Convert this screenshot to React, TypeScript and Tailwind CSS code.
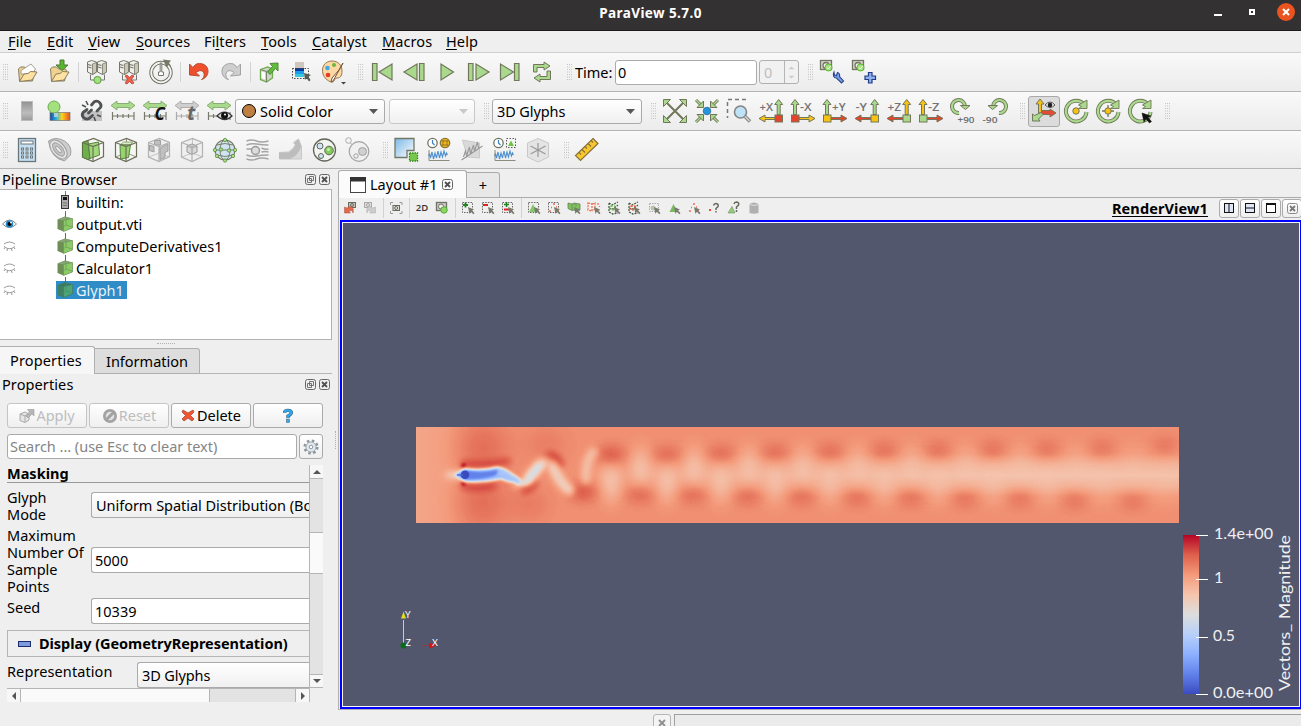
import React from "react";

const G = "#a8d98c";
const O = "#72765a";
const Y = "#f7c211";
const R = "#e8412c";

type Kids = { children?: React.ReactNode };

const Icon = ({ children, wide }: Kids & { wide?: boolean }) => (
  <svg className={wide ? "h-8 w-[33px] shrink-0" : "h-8 w-8 shrink-0"} viewBox={wide ? "-0.5 0 33 32" : "0 0 32 32"} fill="none">
    {children}
  </svg>
);

const Grip = ({ first, tight }: { first?: boolean; tight?: boolean }) => (
  <svg className={first ? "h-8 w-[11px] shrink-0" : tight ? "h-8 w-4 shrink-0" : "h-8 w-[17px] shrink-0"} viewBox={first ? "6 0 11 32" : tight ? "0 0 16 32" : "0 0 17 32"}>
    <path d="M9.5 8v17M11.5 8v17M13.5 8v17" stroke="#b9b9b9" strokeDasharray="1 1.5" strokeWidth=".8" />
  </svg>
);

const Sep = () => (
  <div className="flex h-5 w-[6px] shrink-0 justify-center">
    <div className="w-px bg-[#d2d2d2]" />
  </div>
);

const Folder = ({ save }: { save?: boolean }) => (
  <Icon>
    <path d="M7.500 13l2-2h4l2 2h7l1 2-2 10H8.500z" fill="#efd292" stroke="#8a7d5c" />
    {!save && <path d="M10 14.500l10-6.500 4.500 5-3 5H10z" fill="#fff" stroke="#8a8a80" strokeWidth=".8" />}
    <path d="M8.500 25.500L13 18l4-.5 2.500-2 6.500 .5-5 8z" fill="#ffe2a2" stroke="#8a7d5c" />
    {save && <path d="M17 4h4v5h4L19 14.500 13 9h4z" fill="#5cb42f" stroke="#4b7a33" />}
  </Icon>
);

const Server = ({ off }: { off?: boolean }) => (
  <Icon>
    {[0, 10].map((x) => (
      <g key={x} transform={`translate(${x} 0)`}>
        <path d="M6.500 6l4-1.500 5 1.500v10l-4 2.500-5-2.500z" fill="#efefea" stroke="#77776a" />
        <path d="M11.500 8l4-1.500V16l-4 2.500z" fill="#c7c7ba" stroke="#77776a" strokeWidth=".8" />
        <path d="M7 8.500l3.500 1M7 11l3.500 1" stroke="#77776a" strokeWidth="1.200" />
      </g>
    ))}
    <path d="M9.500 18.500v5.500h14v-5.500" stroke="#777" />
    {off ? (
      <path d="M12 20l2-1 2.500 2.500L19 19l2 1-2.500 3.500L21 27l-2 1-2.500-2.500L14 28l-2-1 2.500-3.500z" fill="#ee5f48" stroke="#b23b2a" strokeWidth=".7" />
    ) : (
      <circle cx="16.500" cy="24" r="3.600" fill="#a1e07e" stroke="#5ba03d" />
    )}
  </Icon>
);

const Box = ({ gray, v = 0 }: { gray?: boolean; v?: number }) => {
  const s = gray ? "#b2b2b2" : "#6c7058";
  return (
    <Icon wide>
      <path d="M5 8.500L16 4.500l10 4v14l-10.500 5L5 23z" fill={gray ? "#efefef" : "#f6f7f3"} stroke={s} strokeWidth="1.200" />
      {v !== 0 && <path d="M16 4.500V19l10 4M16 19L5 23" stroke={s} strokeWidth=".7" />}
      {v === 0 && (
        <>
          <path d="M5 8.500l5.500-2 2 18-2.500 1L5 23z" fill="#6fae4c" stroke="#56743e" />
          <path d="M11 10l10-2 1 13-9.500 3.500z" fill="#9fda79" stroke="#5f7e47" />
        </>
      )}
      {v === 1 && (
        <>
          <path d="M10 10.500l3-2.500h9l-2 3z" fill="#d4f0bd" stroke={s} strokeWidth=".6" />
          <path d="M9.500 11H20l-2 12.500-8 1.500z" fill="#94d46c" stroke="#5f7e47" />
        </>
      )}
      {v === 2 && <path d="M6 11l4.500 1.500v5.500L6 16.500zM11 6.500h6V11h-6zM16.500 14l8-4v7l-3 1.500v5l-5 2z" fill="#c0c0c0" stroke="#a0a0a0" />}
      {v === 3 && (
        <>
          <path d="M10.500 12l5-2 5 2v6l-5 2.500-5-2.500z" fill="#d9d9d9" stroke="#999" />
          <path d="M10.500 12l5 2 5-2M15.500 14v6" stroke="#999" strokeWidth=".8" />
        </>
      )}
      <path d="M5 8.500l10.500 4L26 8.500M15.500 12.500v15" stroke={s} strokeWidth="1.200" />
    </Icon>
  );
};

const RangeIcon = ({ c = G, k }: { c?: string; k?: string }) => (
  <Icon>
    <path d="M4 10.500L10 6v2.500h12V6l6 4.500L22 15v-2.500H10V15z" fill={c} stroke={c === G ? "#82a86d" : "#a8a8a8"} strokeWidth=".9" />
    <path d="M5 21h22M5.500 17v8M27 17v8M10.500 19v4M16 19v4M21.500 19v4" stroke={c === G ? "#77796a" : "#aaa"} strokeWidth="1.200" />
    {k === "c" && <text x="15.500" y="25" fontFamily="Open Sans" fontSize="17" fontWeight="bold" fontStyle="italic" fill="#111">C</text>}
    {k === "t" && <text x="16" y="25" fontFamily="Open Sans" fontSize="20" fontWeight="bold" fontStyle="italic" fill="#666">t</text>}
    {k === "eye" && (
      <>
        <path d="M14 21q7.500-8 15 0q-7 7-15 0z" fill="#ddd" stroke="#333" strokeWidth="1.200" />
        <circle cx="21.500" cy="20.500" r="3.500" fill="#111" />
        <circle cx="22" cy="19.500" r="1" fill="#fff" />
      </>
    )}
  </Icon>
);

const up = (x: number, f: string) => (
  <path d={`M${x - 1.5} 19.500V9.500h-2.500l4-5 4 5h-2.500v10z`} fill={f} stroke={O} />
);

const AxisIcon = ({ t, left, b, u, h }: { t: string; left?: boolean; b: string; u: string; h: string }) => (
  <Icon>
    {up(left ? 8 : 23.7, u)}
    {left ? (
      <path d="M12 22.500h10V20l6 3.500-6 3.500v-2.500H12z" fill={h} stroke={O} />
    ) : (
      <path d="M20 22.500H10V20l-6 3.500 6 3.500v-2.500h10z" fill={h} stroke={O} />
    )}
    <rect x={left ? 4.5 : 20} y="20" width="7.500" height="7" fill={b} stroke={O} />
    <text x={left ? 13 : 4.5} y="15.500" fontFamily="Open Sans" fontSize="10.500" fontWeight="600" textLength={t[0] === "-" ? 11.5 : 13.5} lengthAdjust="spacingAndGlyphs" fill="#747474">{t}</text>
  </Icon>
);

const Rot = ({ flip }: { flip?: boolean }) => (
  <Icon>
    <g transform={flip ? "translate(32 0) scale(-1 1)" : undefined}>
      <path d="M12 18A6.500 6.500 0 1 1 18 11.500" stroke={O} strokeWidth="4" />
      <path d="M12 18A6.500 6.500 0 1 1 18 11.500" stroke={G} strokeWidth="2.200" />
      <path d="M13.500 10.500h9.500l-4.500 4z" fill={G} stroke={O} />
    </g>
    <text x={flip ? 3.5 : 10.5} y="28" fontFamily="Open Sans" fontSize="9.500" fontWeight="600" textLength={flip ? 15 : 17} lengthAdjust="spacingAndGlyphs" fill="#6c6c6c">{flip ? "-90" : "+90"}</text>
  </Icon>
);

const Orbit = ({ k }: { k: number }) => (
  <Icon>
    <path d="M24.500 10A10.300 10.300 0 1 0 26.500 17" stroke={O} strokeWidth="4" />
    <path d="M24.500 10A10.300 10.300 0 1 0 26.500 17" stroke={G} strokeWidth="2.300" />
    <path d="M27 5v8.500h-8.500l3-2-3-1.500z" fill={G} stroke={O} strokeWidth=".9" />
    {k === 1 && <path d="M16 10v12M10 16h12" stroke={O} strokeWidth="1.300" />}
    {k < 2 && <circle cx="16" cy="16" r="3.200" fill={Y} stroke={O} />}
    {k === 2 && <path d="M18 18l9 3-3 1.500 3.500 4-2 1.500-3.500-4-2 3z" fill="#111" stroke="#111" strokeWidth=".5" />}
  </Icon>
);

const Camera = ({ k }: { k: "wrench" | "plus" }) => (
  <Icon>
    <rect x="4.500" y="4.500" width="11" height="9" fill="#d5d5c6" stroke="#737365" strokeWidth="1.300" />
    <circle cx="10" cy="9.500" r="3" fill="#eee" stroke="#737365" strokeWidth="1.300" />
    <circle cx="12.500" cy="11.500" r="3.500" fill="#a8e27f" stroke="#56ba30" />
    <path d="M11 11.500l1.500 1.500 2-3" stroke="#fff" />
    {k === "wrench" ? (
      <path d="M18 16l.5 3 2 .5 1-3c2 .5 2.500 2.500 2 4l4 4.500-2 2-5-5c-3 0-4-3-2.500-6z" fill="#7d9fe8" stroke="#2b458c" strokeWidth="1.100" />
    ) : (
      <path d="M20.500 16.500h3.500V20h3.500v3.500H24V27h-3.500v-3.500H17V20h3.500z" fill="#8eb0ef" stroke="#223a83" strokeWidth="1.200" />
    )}
  </Icon>
);

const Zig = () => <path d="M5 22l1-2 1 4 1.500-6 1.500 7 1.500-6 1.500 5 1.500-7 1.500 7 1.500-6 1.500 5 1.500-6 1.500 5 1-3 1 2" stroke="#4b8fd0" strokeWidth="1.100" />;

const Clock = () => (
  <>
    <circle cx="9" cy="9" r="4.700" fill="#fff" stroke="#6f7560" strokeWidth="1.300" />
    <path d="M9 6v3l2 2" stroke="#397fc4" strokeWidth="1.200" />
  </>
);

const TbShell = ({ children, h }: Kids & { h?: boolean }) => (
  <div className={`flex shrink-0 items-center border-b border-[#b4b4b4] bg-linear-to-b from-[#f9f9f9] to-[#ececec] ${h ? "h-[38px]" : "h-[39px]"}`}>
    {children}
  </div>
);

const Arrow = ({ off }: { off?: boolean }) => (
  <svg className="h-[5px] w-[9px] shrink-0" viewBox="0 0 9 5"><path d="M0 0h9L4.500 5z" fill={off ? "#c9c9c9" : "#565656"} /></svg>
);

const comboBase = "flex h-[25px] shrink-0 items-center rounded-[3px] border border-[#aaaaaa] bg-linear-to-b from-[#ffffff] to-[#f0f0f0]";

const Toolbar1 = () => (
  <TbShell>
    <Grip first />
    <Folder />
    <Folder save />
    <Sep />
    <Server />
    <Server off />
    <Icon>
      <circle cx="16" cy="16.500" r="9.800" stroke="#707266" strokeWidth="3.800" />
      <circle cx="16" cy="16.500" r="9.800" stroke="#f5f5f2" strokeWidth="1.800" />
      <path d="M15.200 7h1.600v9h1.700v3.500h-5V16h1.700z" fill="#fff" stroke="#77796c" />
      <path d="M18 3.500l8 1-2 2.500 2 3-2.500-1-2 2.500z" fill="#777967" />
    </Icon>
    <Sep />
    <Icon><path d="M6.500 8v11l10 1-3.500-3.500c5-4 9-1 8 3.500-.5 2-1.500 3-2.500 3.500 9-2 9-16-2-16-4 0-5 2-6.500 4z" fill="#ee4f2d" stroke="#b0482f" strokeWidth=".9" /></Icon>
    <Icon><path d="M25.500 8v11l-10 1 3.500-3.500c-5-4-9-1-8 3.500.5 2 1.500 3 2.500 3.500-9-2-9-16 2-16 4 0 5 2 6.500 4z" fill="#cecece" stroke="#9c9c9c" strokeWidth=".9" /></Icon>
    <Sep />
    <Icon>
      <path d="M7.500 13.500l7-2.500 5 2v9l-6 4-6-2.500z" fill="#cfd5c4" stroke="#6cab49" strokeWidth="1.300" />
      <path d="M7.500 13.500l6 2 6-2.500M13.500 15.500V26" stroke="#77806a" />
      <path d="M8.500 15.500l3.500 1v7l-3.500-1.500z" fill="#fff" />
      <path d="M14.500 16l5-5.500-2.500-3 8-.5V15l-2.500-2.500-5.500 6z" fill="#62bb3a" stroke="#4e8838" />
    </Icon>
    <Icon>
      <rect x="10" y="6" width="9" height="7" fill="#cfc6bf" />
      <rect x="10" y="12" width="9" height="3.500" fill="#0b3a9e" />
      <rect x="10" y="15" width="9" height="3" fill="#1c9bea" />
      <rect x="10" y="18" width="9" height="3" fill="#37c8e0" />
      <path d="M7.500 12.500h16v10h-16z" stroke="#444" strokeDasharray="1.500 1.500" />
      <path d="M19 17l7 2-2.500 1.500 2 3.500-1.500 1.500-2.500-3.500-1.500 2z" fill="#555b50" />
    </Icon>
    <Icon>
      <path d="M15 5c-7 0-11 6-9 13 1 4 5 7 8 8 4 1 3-4 6-4 4 0 5-3 5-7 0-6-4-10-10-10z" fill="#fbd8a4" stroke="#97794e" />
      <circle cx="17" cy="9" r="2" fill="#70b53e" /><circle cx="10.500" cy="12" r="2.300" fill="#43a8e0" /><circle cx="11" cy="19" r="2.300" fill="#e83824" />
      <path d="M26 7l-5 9-5 9-2 1 1-4 7-8z" fill="#fff" stroke="#765638" />
      <path d="M24 26h5l-2.500 2.500z" fill="#444" />
    </Icon>
    <Grip />
    <Icon><path d="M6.500 7.500h4.500v17H6.500zM26 8v16l-13-8z" fill={G} stroke={O} strokeWidth="1.200" /></Icon>
    <Icon><path d="M21.500 7.500H26v17h-4.500zM19 8v16L6 16z" fill={G} stroke={O} strokeWidth="1.200" /></Icon>
    <Icon><path d="M11 8v16l12.500-8z" fill={G} stroke={O} strokeWidth="1.200" /></Icon>
    <Icon><path d="M6.500 7.500H11v17H6.500zM14 8v16l13-8z" fill={G} stroke={O} strokeWidth="1.200" /></Icon>
    <Icon><path d="M20.500 7.500H25v17h-4.500zM6.500 8v16l13-8z" fill={G} stroke={O} strokeWidth="1.200" /></Icon>
    <Icon>
      <path d="M7.500 16V8.500H18V6l6 4-6 4v-2.500h-7V16zM24.500 15v8.500H14V26l-6-4 6-4v2.500h7V15z" fill={G} stroke={O} />
    </Icon>
    <Grip />
    <div className="w-[40px] shrink-0 whitespace-nowrap">Time:</div>
    <div className="flex h-[25px] w-[142px] shrink-0 items-center rounded-[3px] border border-[#aaaaaa] bg-white pl-[2px]">0</div>
    <div className="ml-[2px] flex h-[24px] w-[40px] shrink-0 items-center rounded-[3px] border border-[#b0b0b0] bg-[#f1f1f1] pl-[4px] text-[#bdbdbd]">
      <span className="w-[20px]">0</span>
      <svg className="h-[22px] w-[14px] border-l border-[#b5b5b5]" viewBox="0 0 14 22"><path d="M4 8h6L7 5zM4 15h6l-3 3z" fill="#c9c9c9" /></svg>
    </div>
    <Grip />
    <Camera k="wrench" />
    <Camera k="plus" />
  </TbShell>
);

const Toolbar2 = () => (
  <TbShell>
    <Grip first />
    <Icon>
      <defs><linearGradient id="gr" x1="0" x2="0" y1="0" y2="1"><stop stopColor="#929292" /><stop offset=".6" stopColor="#bdbdbd" /><stop offset="1" stopColor="#999" /></linearGradient></defs>
      <rect x="10.500" y="6.500" width="11" height="19" fill="url(#gr)" stroke="#bbb" />
    </Icon>
    <Icon>
      <defs><linearGradient id="rb"><stop stopColor="#17489b" /><stop offset=".3" stopColor="#26b0e8" /><stop offset=".6" stopColor="#ffd21f" /><stop offset="1" stopColor="#e4501e" /></linearGradient></defs>
      <rect x="7" y="17.500" width="20" height="8" fill="url(#rb)" stroke="#777" strokeWidth=".7" />
      <circle cx="11" cy="12" r="6" fill="#a2e17c" stroke="#71a954" />
      <path d="M11 18h4v4h-4z" fill="#d8dce0" opacity=".7" />
    </Icon>
    <Icon>
      <rect x="7" y="16" width="20" height="10" fill="#c2c2c2" />
      <g stroke="#4e5252" strokeWidth="2.800" strokeLinecap="round">
        <path d="M16.500 10l2.500-3q3-2 5.500 .5t1 5L22 16" />
        <path d="M12 14.500L8.500 17q-2.500 3 0 5.500t5.500 1l3.500-3" />
        <path d="M13.500 18l3-3" />
      </g>
      <path d="M11 6l2 4M7 10l4 2M22 20l4 1.500M19 22l1.500 4" stroke="#4e5252" strokeWidth="1.600" />
    </Icon>
    <RangeIcon />
    <RangeIcon k="c" />
    <RangeIcon c="#cfcfcf" k="t" />
    <RangeIcon k="eye" />
    <div className={`${comboBase} w-[150px] pr-[6px] pl-[6px]`}>
      <span className="mr-[4px] h-[14px] w-[14px] rounded-full border border-black bg-[#c07f42]" />
      <span className="flex-1 whitespace-nowrap">Solid Color</span>
      <Arrow />
    </div>
    <div className={`${comboBase} ml-[4px] w-[86px] justify-end border-[#c8c8c8] pr-[6px]`}><Arrow off /></div>
    <Grip />
    <div className={`${comboBase} w-[150px] justify-between pr-[6px] pl-[4px]`}><span className="tracking-[-0.1px] whitespace-nowrap">3D Glyphs</span><Arrow /></div>
    <Grip />
    <Icon>
      <path d="M8 8l16 16M24 8L8 24" stroke={O} strokeWidth="2" />
      <path d="M4.500 4.500h7l-7 7zM27.500 4.500v7l-7-7zM4.500 27.500v-7l7 7zM27.500 27.500h-7l7-7z" fill={G} stroke={O} />
    </Icon>
    <Icon>
      <path d="M5 5l5 5M27 5l-5 5M5 27l5-5M27 27l-5-5" stroke={O} strokeWidth="3" />
      <path d="M5 5l5 5M27 5l-5 5M5 27l5-5M27 27l-5-5" stroke={G} strokeWidth="1.200" />
      <path d="M12.500 6v6.500H6zM19.500 6v6.500H26zM12.500 26v-6.500H6zM19.500 26v-6.500H26z" fill={G} stroke={O} />
      <circle cx="16" cy="16" r="3.800" fill="#2596dd" stroke="#286c98" strokeWidth=".8" />
    </Icon>
    <Icon>
      <path d="M23 4.500H4.500V23" stroke="#777" strokeWidth="1.500" strokeDasharray="4 3" />
      <circle cx="17.500" cy="17" r="6" fill="#bfe2f7" stroke="#858585" strokeWidth="1.600" />
      <path d="M22 21.500l5 5" stroke="#858585" strokeWidth="3.500" /><path d="M22 21.500l4.500 4.500" stroke="#ddd" strokeWidth="1.200" />
    </Icon>
    <AxisIcon t="+X" b={R} u={G} h={Y} />
    <AxisIcon t="-X" left b={R} u={G} h={Y} />
    <AxisIcon t="+Y" left b={Y} u={G} h={R} />
    <AxisIcon t="-Y" b={Y} u={G} h={R} />
    <AxisIcon t="+Z" b={G} u={Y} h={R} />
    <AxisIcon t="-Z" left b={G} u={Y} h={R} />
    <Rot />
    <Rot flip />
    <Grip />
    <div className="flex h-[31px] w-8 shrink-0 items-center justify-center rounded-[3px] border border-[#a9a9a9] bg-[#dcdcdc]">
      <Icon>
        <path d="M11.500 18v-2.500H22V14l6 4-6 4v-2.500h-9z" fill="#e54b32" stroke={O} />
        <path d="M10.500 18V9H8l4-5 4 5h-2.500v9z" fill={Y} stroke={O} />
        <path d="M13 17.500l2 2-4.500 4.500 1.500 2H4.500v-7l2 1.500z" fill={G} stroke={O} />
        <path d="M17 10q5-6 10 0q-5 5-10 0z" fill="#eee" stroke="#555" /><circle cx="22" cy="10" r="2.300" fill="#222" />
      </Icon>
    </div>
    <Orbit k={0} />
    <Orbit k={1} />
    <Orbit k={2} />
    <Grip />
  </TbShell>
);

const Toolbar3 = () => (
  <TbShell h>
    <Grip first />
    <Icon wide>
      <rect x="7" y="4.500" width="17" height="23" fill="#c6dff0" stroke="#68757a" strokeWidth="1.300" />
      <rect x="9.500" y="7" width="12" height="3" fill="#fff" stroke="#68757a" />
      <path d="M9.500 15h3M14 15h3M18.500 15h3M9.500 19h3M14 19h3M18.500 19h3M9.500 23h3M14 23h3M18.500 23h3" stroke="#68757a" strokeWidth="3" />
      <path d="M10.500 15h1M15 15h1M19.500 15h1M10.500 19h1M15 19h1M19.500 19h1M10.500 23h1M15 23h1M19.500 23h1" stroke="#fff" strokeWidth="1.200" />
    </Icon>
    <Icon wide>
      <path d="M4 7q7-5 16 0 8 5 6 14l-6 6Q6 24 4 7z" fill="#cdcdcd" stroke="#a0a0a0" />
      <ellipse cx="14" cy="15.500" rx="6.500" ry="11" transform="rotate(-40 14 15.500)" fill="#e4e4e4" stroke="#a0a0a0" />
      <ellipse cx="14" cy="15.500" rx="4" ry="8" transform="rotate(-40 14 15.500)" fill="#c6c6c6" stroke="#a0a0a0" />
      <ellipse cx="14" cy="15.500" rx="1.500" ry="4" transform="rotate(-40 14 15.500)" fill="#eee" stroke="#a0a0a0" />
    </Icon>
    <Box /><Box v={1} /><Box gray v={2} /><Box gray v={3} />
    <Icon wide>
      <circle cx="15.500" cy="16" r="10" fill="#cfe3f2" stroke="#72785f" strokeWidth="1.200" />
      <path d="M5.500 16h20M7.500 11q8-3 16 0M7.500 21q8 3 16 0" stroke="#72785f" strokeWidth=".9" />
      <ellipse cx="15.500" cy="16" rx="5" ry="10" stroke="#72785f" strokeWidth=".9" />
      {[[15.5, 6], [15.5, 26.500], [5.5, 16], [25.5, 16], [11.5, 15.500], [19.5, 16.500], [7.5, 22], [23.5, 22]].map(([x, y]) => (
        <circle key={`${x}-${y}`} cx={x} cy={y} r="1.700" fill="#a5df80" stroke="#55803e" strokeWidth=".7" />
      ))}
    </Icon>
    <Icon wide>
      <path d="M4 7q5-2 10 0t12 0M4 11q5-2 10-1t12 1M4 15h7M19 14q4 2 7 1M4 21q5 2 10 1t12-1M4 25q5 2 10 0t12 0M19 18q4-1 7 0" stroke="#a5a5a5" strokeWidth="1.500" />
      <circle cx="13" cy="16.500" r="4" fill="#dcdcdc" stroke="#9a9a9a" strokeWidth="1.500" />
    </Icon>
    <Icon wide><path d="M4 25V18.500l9-.5q5-3 7-7.500l-2-2L23 5l3 8v12z" fill="#d9d9d9" stroke="#c8c8c8" /><path d="M3.500 18.500H13q5-3 7-7.500l-2-1.500 5-4.500 3 7.500q-4 10-12 12.500H3.500z" fill="#bdbdbd" /></Icon>
    <Icon wide>
      <circle cx="16" cy="16" r="11" fill="#f3f5f1" stroke="#61655a" strokeWidth="1.300" />
      <circle cx="11.500" cy="12" r="3" fill="#cfe3f2" stroke="#61655a" /><circle cx="20.500" cy="16.500" r="4.300" fill="#81cb5b" stroke="#61655a" /><circle cx="12.500" cy="22" r="2.500" fill="#cfe3f2" stroke="#61655a" />
      <circle cx="20" cy="15.500" r="1.500" fill="#cdf0b7" />
    </Icon>
    <Icon wide>
      <circle cx="7" cy="6.500" r="2.800" stroke="#aaa" /><circle cx="17.500" cy="17.500" r="9.800" fill="#f0f0f0" stroke="#a3a3a3" strokeWidth="1.200" />
      <circle cx="21" cy="17.500" r="4" fill="#d0d0d0" stroke="#a0a0a0" /><circle cx="14.500" cy="22" r="2.200" stroke="#a0a0a0" /><path d="M9 9l2 2" stroke="#aaa" />
    </Icon>
    <Grip tight />
    <Icon wide>
      <defs><linearGradient id="bl" x2="1" y2="1"><stop stopColor="#7cb8e6" /><stop offset="1" stopColor="#fff" /></linearGradient></defs>
      <path d="M4.500 4.500h19v12h-7v7h-12z" fill="url(#bl)" stroke="#727868" strokeWidth="1.300" />
      <rect x="19" y="19" width="8" height="8" fill="#77c74d" stroke="#348b18" strokeWidth="1.300" strokeDasharray="1.500 1" />
    </Icon>
    <Icon wide><Clock /><circle cx="21.500" cy="9" r="4.700" fill="#efba20" stroke="#8a7339" strokeWidth="1.300" /><path d="M18 7h7M18 11h7M19.500 6v6M23.500 6v6" stroke="#8a6b20" strokeWidth=".8" /><Zig /><path d="M5.500 16v10.500H26" stroke="#8a8c7e" /></Icon>
    <Icon wide><path d="M6 6l17 3v15l-12-1z" fill="#d9d9d9" stroke="#cacaca" /><path d="M5 26L26 12M7 23l2-6 1 5 3-9 1 7 3-9 1 6 3-9 1 6" stroke="#999" strokeWidth="1.100" /></Icon>
    <Icon wide><Clock /><rect x="17" y="4.500" width="9" height="9" stroke="#555" strokeDasharray="1.500 1.500" /><path d="M21.500 6.500l3 5.500h-6z" fill="#70c344" /><Zig /><path d="M5.500 16v10.500H26" stroke="#8a8c7e" /></Icon>
    <Icon wide><path d="M15.500 4.500L26 9v14l-10.500 5L5 23V9z" fill="#e4e4e4" stroke="#c8c8c8" /><path d="M15.500 9v14M8 12l15 8M23 12L8 20" stroke="#999" strokeWidth="1.200" /></Icon>
    <Grip tight />
    <Icon wide><path d="M21.500 4.500l5 5-17.500 17-5-5z" fill="#f9c62d" stroke="#86713a" strokeWidth="1.200" /><path d="M19.500 6.500l2 2M16.500 9.500l3 3M13.500 12.500l2 2M10.500 15.500l3 3M7.500 18.500l2 2" stroke="#86713a" strokeWidth="1.200" /></Icon>
  </TbShell>
);

const CloseBox = () => (
  <svg className="h-[11px] w-[11px] shrink-0" viewBox="0 0 11 11" fill="none"><rect x=".5" y=".5" width="10" height="10" rx="2" stroke="#666" /><path d="M3 3l5 5M8 3L3 8" stroke="#4f4f4f" strokeWidth="1.800" /></svg>
);

const DockButtons = () => (
  <div className="ml-auto flex gap-[3px] pr-[2px]">
    <svg className="h-[11px] w-[11px]" viewBox="0 0 11 11" fill="none"><rect x=".5" y=".5" width="10" height="10" rx="2" stroke="#666" /><path d="M4.500 2.500h4v4h-4zM2.500 4.500h4v4h-4z" stroke="#666" strokeWidth=".9" /></svg>
    <CloseBox />
  </div>
);

const CubeIcon = ({ sel }: { sel?: boolean }) => (
  <svg className="h-[22px] w-4 shrink-0" viewBox="0 -3 16 22">
    <path d="M8.500 -3v4" stroke="#666" />
    {!sel && <path d="M8.500 17v2" stroke="#666" />}
    <path d="M.5 3.500L8 .5l7.500 2v9.500l-9 3.500-6-2.500z" fill={sel ? "#3f8060" : "#6d8f56"} />
    <path d="M.5 3.500L8 .5l7.500 2-9 2z" fill={sel ? "#3c7a5e" : "#87a574"} />
    <path d="M6.500 4.500l9-2V12l-9 3.500z" fill={sel ? "#4fa374" : "#8cc968"} stroke={sel ? "#3d7462" : "#6b8c55"} strokeWidth=".5" />
    <path d="M9 1.500V9l-3 2M9 9l6 2" stroke={sel ? "#45906a" : "#6a9a50"} strokeWidth=".7" fill="none" />
  </svg>
);

const Eye = ({ open }: { open?: boolean }) =>
  open ? (
    <svg className="h-[12px] w-[15px]" viewBox="0 0 15 12"><path d="M.5 6q7-8 14 0q-7 7-14 0z" fill="#fff" stroke="#888" /><circle cx="7.500" cy="6" r="3.800" fill="#2387c8" /><circle cx="7.500" cy="6" r="2" fill="#000" /><circle cx="9" cy="4.500" r="1" fill="#fff" /></svg>
  ) : (
    <svg className="h-[12px] w-[15px]" viewBox="0 0 15 12" fill="none" stroke="#999"><path d="M2 4q5.500-4 11 0M2 6.500q5.500 4.500 11 0M3 7.500L2 9M5.500 8.500L5 11M9.500 8.500l.5 2.500M12 7.500l1 1.500" /></svg>
  );

const items = ["output.vti", "ComputeDerivatives1", "Calculator1", "Glyph1"];

const Pipeline = () => (
  <div className="h-[151px] w-[332px] border border-l-0 border-[#b2b2b2] bg-white pt-px">
    <div className="flex h-[22px] items-center">
      <span className="w-[58px]" />
      <svg className="h-[22px] w-[15px]" viewBox="0 0 15 22"><path d="M7.500 0v4M7.500 20v2" stroke="#777" /><rect x="3.500" y="4.500" width="7" height="13" fill="#aaa" stroke="#333" /><rect x="5" y="6" width="4" height="3" fill="#111" /><path d="M5 12h4M5 14.500h4" stroke="#777" /></svg>
      <span className="ml-[3px] tracking-[0.05px]">builtin:</span>
    </div>
    {items.map((n, i) => (
      <div key={n} className="flex h-[22px] items-center">
        <span className="w-[56px] pl-[2px]"><Eye open={i === 0} /></span>
        <div className={n === "Glyph1" ? "flex h-[18px] items-center bg-[#308cc6] pr-[3px] pl-[1px] text-[#e9f2f8]" : "flex h-[22px] items-center pl-[1px]"}>
          <CubeIcon sel={n === "Glyph1"} />
          <span className="ml-[3px]">{n}</span>
        </div>
      </div>
    ))}
  </div>
);

const btn = "flex h-[25px] shrink-0 items-center justify-center rounded-[3px] border border-[#aaaaaa] bg-linear-to-b from-[#ffffff] to-[#efefef]";
const field = "flex h-[26px] min-w-0 flex-1 items-center rounded-l-[3px] border border-r-0 border-[#aaaaaa] bg-white whitespace-nowrap overflow-hidden";

const PropertiesPanel = () => (
  <div className="flex flex-col">
    <div className="flex h-[28px] items-end">
      <div className="flex h-[28px] w-[95px] items-center rounded-tr-[3px] border-t border-r border-[#b0b0b0] bg-[#f6f6f6] pl-[10px] tracking-[0.15px]">Properties</div>
      <div className="flex h-[26px] w-[105px] items-center justify-center rounded-tr-[3px] border border-l-0 border-[#b0b0b0] bg-[#dddddd]">Information</div>
      <div className="h-px w-[132px] bg-[#b5b5b5]" />
    </div>
    <div className="flex h-[20px] w-[332px] items-center pl-[2px] tracking-[0.1px]">Properties<DockButtons /></div>
    <div className="mt-[9px] flex gap-[2px] pl-[7px]">
      <div className={`${btn} w-[80px] border-[#c4c4c4] text-[#bdbdbd]`}>
        <svg className="mr-[1px] h-4 w-4" viewBox="0 0 16 16"><path d="M1 6l5-2 4 2v6l-4 2.500-5-2z" fill="#e5e5e5" stroke="#aaa" /><path d="M1 6l5 2 4-2M6 8v6" stroke="#aaa" fill="none" /><path d="M6.500 7.500l4-3.500-2-2.500H15V8l-2-2-4 4z" fill="#b5b5b5" stroke="#a0a0a0" strokeWidth=".6" /></svg>Apply
      </div>
      <div className={`${btn} w-[80px] border-[#c4c4c4] text-[#bdbdbd]`}>
        <svg className="mr-[1px] h-4 w-4" viewBox="0 0 16 16"><circle cx="8" cy="8" r="7" fill="#a2a2a2" /><circle cx="8" cy="8" r="4.300" fill="#e0e0e0" /><path d="M4 12l8-8" stroke="#a2a2a2" strokeWidth="3" /></svg>Reset
      </div>
      <div className={`${btn} w-[80px]`}>
        <svg className="mr-[2px] h-[13px] w-[14px]" viewBox="0 0 14 13"><path d="M2 1l5 3 5-3 1 2-3.500 3.500L13 10l-2 2-4-3-4 3-2-2 3.500-3.500L1 3z" fill="#f2562f" stroke="#a44c38" strokeWidth=".8" /></svg>Delete
      </div>
      <div className={`${btn} w-[70px]`}>
        <svg className="h-[15px] w-3" viewBox="0 0 12 16" fill="none"><path d="M2.500 5V4Q3 2.500 6 2.500t3.500 2T6 8.500V11" stroke="#2f6580" strokeWidth="3.600" /><path d="M2.500 4.700V4Q3 2.500 6 2.500t3.500 2T6 8.500v2.200" stroke="#32a7ed" strokeWidth="2.300" /><rect x="4.500" y="12.300" width="3" height="3" fill="#32a7ed" stroke="#2f6580" strokeWidth=".6" /></svg>
      </div>
    </div>
    <div className="mt-[6px] flex h-[25px] items-center gap-[2px] pl-[7px]">
      <div className="flex h-[25px] w-[290px] items-center rounded-[3px] border border-[#aaaaaa] bg-white pl-[2px] tracking-[-0.02px] whitespace-nowrap text-[#858585]">Search ... (use Esc to clear text)</div>
      <div className={`${btn} h-[23px] w-[24px]`}>
        <svg className="h-4 w-4" viewBox="0 0 16 16" fill="none"><circle cx="8" cy="8" r="6.300" stroke="#8c979e" strokeWidth="2.600" strokeDasharray="2.500 2.450" /><circle cx="8" cy="8" r="5" fill="#e3ebf0" stroke="#8c979e" strokeWidth=".8" /><circle cx="8" cy="8" r="1.800" fill="#fff" stroke="#8c979e" /></svg>
      </div>
    </div>
    <div className="mt-[6px] flex pl-[7px]">
      <div className="-mt-[5px] h-[228px] w-[302px] overflow-hidden pt-[5px] leading-[17px]">
        <div className="h-[18px] border-b border-[#999] font-bold">Masking</div>
        <div className="mt-[6px] flex h-[38px]">
          <div className="w-[84px] whitespace-pre">{"Glyph\nMode"}</div>
          <div className={`${field} mt-[3px] bg-linear-to-b from-[#fff] to-[#f0f0f0] pl-[4px] tracking-[-0.03px]`}>Uniform Spatial Distribution (Bo</div>
        </div>
        <div className="flex h-[72px] items-start">
          <div className="w-[84px] whitespace-pre">{"Maximum\nNumber Of\nSample\nPoints"}</div>
          <div className={`${field} mt-[20px] flex-1 pl-[3px]`}>5000</div>
        </div>
        <div className="flex h-[30px]">
          <div className="w-[84px]">Seed</div>
          <div className={`${field} -mt-px pl-[3px]`}>10339</div>
        </div>
        <div className="mt-px flex h-[27px] items-center border border-r-0 border-[#b5b5b5] pl-[10px] font-bold">
          <span className="mr-[8px] h-[6px] w-[13px] border border-[#1c2c6b] bg-[#7f9be0]" />
          <span className="tracking-[-0.04px] whitespace-nowrap">Display (GeometryRepresentation)</span>
        </div>
        <div className="mt-[5px] flex">
          <div className="w-[130px] pt-px tracking-[0.1px]">Representation</div>
          <div className={`${field} bg-linear-to-b from-[#fff] to-[#f0f0f0] pl-[4px] tracking-[-0.1px]`}>3D Glyphs</div>
        </div>
      </div>
      <div className="flex h-[223px] w-[14px] flex-col border-l border-[#b5b5b5] bg-[#e3e3e3]">
        <div className="flex h-[14px] items-center justify-center border-b border-[#b5b5b5] bg-[#f7f7f7]"><svg className="h-1 w-2" viewBox="0 0 8 4"><path d="M0 4h8L4 0z" fill="#555" /></svg></div>
        <div className="mt-[53px] h-[42px] border-y border-[#b5b5b5] bg-[#fafafa]" />
        <div className="mt-auto flex h-[14px] items-center justify-center border-y border-[#b5b5b5] bg-[#f7f7f7]"><svg className="h-1 w-2" viewBox="0 0 8 4"><path d="M0 0h8L4 4z" fill="#555" /></svg></div>
      </div>
    </div>
    <div className="ml-[7px] flex h-[14px] w-[303px] border-t border-r border-[#b5b5b5] bg-[#e3e3e3]">
      <div className="flex w-[14px] items-center justify-center border-r border-[#b5b5b5] bg-[#f7f7f7]"><svg className="h-2 w-1" viewBox="0 0 4 8"><path d="M4 0v8L0 4z" fill="#555" /></svg></div>
      <div className="w-[189px] border-r border-[#b5b5b5] bg-[#fafafa]" />
      <div className="ml-auto flex w-[14px] items-center justify-center border-l border-[#b5b5b5] bg-[#f7f7f7]"><svg className="h-2 w-1" viewBox="0 0 4 8"><path d="M0 0v8l4-4z" fill="#555" /></svg></div>
    </div>
  </div>
);

const Sm = ({ children }: Kids) => (
  <svg className="h-5 w-5 shrink-0" viewBox="0 0 20 20" fill="none">{children}</svg>
);
const Cur = () => <path d="M10 9l6 2.500-2 1 2.500 2.500-1.200 1.200-2.500-2.500L11.500 16z" fill="#77796c" />;
const Dash = () => <rect x="4.500" y="4.500" width="10" height="10" stroke="#666" strokeDasharray="1.500 1.200" />;
const Pts = () => <path d="M9 6h2M5 13h2M13 12h2M7 9.500h1M12 9h1" stroke="#f0694f" strokeWidth="1.600" />;
const Poly = ({ c }: { c: string }) => (
  <>
    <path d="M5 5l3 2 6-3M5 5v9l4 2 5-1M5 10l4 1 5-4" stroke="#3e5a39" strokeWidth="1.200" strokeDasharray="2 1" />
    <path d="M7 8h4v4H7z" stroke={c} strokeWidth="1.200" strokeDasharray="2 1" />
    <Cur />
  </>
);

const ViewToolbar = () => (
  <div className="flex h-[20px] w-[962px] items-center pl-px">
    <Sm><rect x="8.500" y="4.500" width="7" height="5" fill="#c4c4b4" stroke="#686b60" /><circle cx="12" cy="7" r="1.500" stroke="#686b60" /><path d="M4.500 9v6h6l-1.500-1.500q3-2.500 4 1.500 1.500-6-3-6.500L7 10z" fill="#e4684c" stroke="#a4503e" strokeWidth=".5" /></Sm>
    <Sm><rect x="4.500" y="4.500" width="7" height="5" fill="#ddd" stroke="#aaa" /><circle cx="8" cy="7" r="1.500" stroke="#aaa" /><path d="M15.500 9v6h-6l1.500-1.500q-3-2.500-4 1.500-1.500-6 3-6.500l3 1.500z" fill="#ccc" stroke="#aaa" strokeWidth=".5" /></Sm>
    <Sep />
    <Sm><rect x="7" y="7.500" width="6.500" height="5" fill="#deded4" stroke="#66695c" /><circle cx="10.200" cy="10" r="1.500" stroke="#66695c" /><path d="M4.500 7V4.500H7M13.500 4.500H16V7M4.500 13v2.500H7M13.500 15.500H16V13" stroke="#999" /></Sm>
    <Sep />
    <div className="w-5 text-center font-[Open_Sans] text-[9.5px] font-semibold text-[#333]">2D</div>
    <Sm><rect x="4.500" y="4.500" width="10" height="8" fill="#ccc" stroke="#6e7163" strokeWidth="1.300" /><circle cx="9" cy="8.500" r="2.500" fill="#eee" stroke="#6e7163" /><circle cx="12" cy="12" r="3.200" fill="#8ed763" stroke="#58ac37" /></Sm>
    <Sep />
    <Sm><Dash /><path d="M5 7h5M7.500 4.500v5" stroke="#1f861f" strokeWidth="1.800" /><Cur /></Sm>
    <Sm><Dash /><path d="M5 7h5" stroke="#e32020" strokeWidth="2" /><Cur /></Sm>
    <Sm><Dash /><path d="M6 6.500h5M8.500 4v5" stroke="#1f861f" strokeWidth="1.500" /><path d="M6 11.500h5" stroke="#e32020" strokeWidth="2" /><Cur /></Sm>
    <Sep />
    <Sm><Dash /><path d="M9 6l4 8H5z" fill="#86c767" /><Cur /></Sm>
    <Sm><Dash /><Pts /><Cur /></Sm>
    <Sm><path d="M4 5l4 1 2-1 6 1v6l-3 2-3-2-2 .5L4 10.500z" fill="#7fc35d" stroke="#66815a" strokeWidth=".8" /><path d="M8 6v6M10 6l3 1.500" stroke="#66815a" strokeWidth=".7" /><Cur /></Sm>
    <Sm><path d="M4 5l4 1v7l-4-1zM8 6l3-1v6l-3 2M14 5v2M15.500 8v1M15 12v1" stroke="#f07052" strokeWidth="1.300" strokeDasharray="2 1" /><Cur /></Sm>
    <Sm><Poly c="#66ba45" /></Sm>
    <Sm><Poly c="#f04b2f" /></Sm>
    <Sm><rect x="5.500" y="5.500" width="9" height="8" stroke="#aaa" strokeDasharray="1.500 1" /><circle cx="9" cy="10" r="2" fill="#b5ceaa" stroke="#999" strokeWidth=".5" /><Cur /></Sm>
    <Sm><path d="M9.500 6l4 8h-8z" fill="#79bb5e" /><Cur /></Sm>
    <Sm><Pts /><Cur /></Sm>
    <Sm><path d="M5 12h2" stroke="#f04b2f" strokeWidth="2" /><path d="M9.500 7.500q.5-2 2.500-2 3 .5 2 3l-2 2v1.500M12 13v1.500" stroke="#656860" strokeWidth="1.500" /></Sm>
    <Sm><path d="M8 8.500l3 6.500H4z" fill="#93cb78" stroke="#748969" strokeWidth=".6" /><path d="M10 6q.5-2 2.500-2 3 .5 2 3l-2 2v2M12.500 12v2" stroke="#656860" strokeWidth="1.500" /></Sm>
    <Sm><path d="M5.500 6q4.500-3 9 0v9q-4.500 1.500-9 0z" fill="#b0b0b0" /><path d="M5.500 6.500q4.500 2 9 0" stroke="#ddd" /></Sm>
    <div className="mr-[11px] ml-auto border-b border-black text-[14.5px] leading-[16px] font-bold tracking-[0.12px]">RenderView1</div>
    <div className="-mr-px flex gap-px">
      {[0, 1, 2, 3].map((k) => (
        <div key={k} className="flex h-[19px] w-[20px] items-center justify-center rounded-[3px] border border-[#ababab] bg-linear-to-b from-white to-[#efefef]">
          {k === 3 ? <span className="opacity-75"><CloseBox /></span> : (
            <svg className="h-[10px] w-[10px]" viewBox="0 0 10 10" fill="none">
              <rect x=".5" y=".5" width="9" height="9" fill={k === 2 ? "#fff" : "#e0e5f5"} stroke="#111" />
              {k === 0 && <path d="M5 0v10" stroke="#111" />}
              {k === 1 && <path d="M0 5h10" stroke="#111" />}
              {k === 2 && <path d="M0 1h10" stroke="#111" strokeWidth="2" />}
            </svg>
          )}
        </div>
      ))}
    </div>
  </div>
);

// Vortex street: fast cores above and below the centreline, slow pockets between them.
const topBlobs = [[611, 455], [667, 455.5], [721, 454.5], [775, 453.5], [830, 452.5], [884, 451.5], [938, 451], [993, 450], [1047, 450], [1102, 449], [1165, 446]];
const botBlobs = [[583, 492], [640, 494], [693, 494], [748, 495.5], [802, 496], [857, 497], [911, 497], [965, 498], [1020, 498], [1075, 500], [1133, 501]];

const Flow = () => (
  <g filter="url(#cmap)">
    <rect x="416" y="427" width="763" height="96" fill="#c5c5c5" />
    <rect x="416" y="427" width="60" height="96" fill="url(#inlet)" />
    <ellipse cx="483" cy="448" rx="50" ry="52" fill="url(#hi)" opacity=".4" />
    <ellipse cx="483" cy="502" rx="50" ry="52" fill="url(#hi)" opacity=".4" />
    <ellipse cx="546" cy="444" rx="42" ry="38" fill="url(#hi)" opacity=".2" />
    <ellipse cx="530" cy="504" rx="38" ry="36" fill="url(#hi)" opacity=".24" />
    <rect x="570" y="440" width="620" height="70" fill="url(#band)" mask="url(#bm)" />
    {botBlobs.map(([x], i) => <ellipse key={x} cx={x + 1} cy={469} rx={21 + i * 0.6} ry="36" fill="url(#lo)" opacity={i === 0 ? 0 : 0.85 - i * 0.06} />)}
    {topBlobs.map(([x], i) => <ellipse key={x} cx={x} cy={481} rx={21 + i * 0.6} ry="36" fill="url(#lo)" opacity={0.85 - i * 0.06} />)}
    {topBlobs.map(([x, y], i) => <ellipse key={x} cx={x} cy={y} rx="27" ry="21" fill="url(#hi)" opacity={(i === 0 ? 0.58 : 0.46) - i * 0.018} />)}
    {botBlobs.map(([x, y], i) => <ellipse key={x} cx={x} cy={y} rx="27" ry="21" fill="url(#hi)" opacity={(i === 0 ? 0.58 : 0.46) - i * 0.018} />)}
    <g filter="url(#b3)" fill="none" strokeLinecap="round">
      <path d="M586 479Q585 462 593 452" stroke="#9e9e9e" strokeWidth="8" />
      <path d="M553 467q6 15 16 23" stroke="#8e8e8e" strokeWidth="9" />
      <path d="M549 454q8 1 12 10" stroke="#f0f0f0" strokeWidth="6" />
      <path d="M524 491q7-1 11-8" stroke="#f0f0f0" strokeWidth="6" />
      <path d="M464 463q20 2 44-2" stroke="#eeeeee" strokeWidth="6" />
      <path d="M464 487q16 3 30-1" stroke="#eeeeee" strokeWidth="6" />
      <path d="M449 475h10" stroke="#929292" strokeWidth="7" />
      <path d="M528 480q7-10 13-16" stroke="#666" strokeWidth="8" />
      <path d="M515 485l10-2M540 461l7 1" stroke="#999" strokeWidth="4" />
    </g>
    <g filter="url(#b15)" fill="none">
      <circle cx="463.500" cy="465.500" r="2.500" fill="#fff" />
      <circle cx="463.500" cy="483.500" r="2.500" fill="#fff" />
      <path d="M454 475L464 468.500Q483 471 497 467Q508 468 521 482Q513 484 501 479Q484 483 464 481.500z" fill="#4a4a4a" />
      <path d="M498 471.500Q508 473 520 483" stroke="#555" strokeWidth="6" />
      <path d="M519 483q7 1 12-6" stroke="#808080" strokeWidth="4" />
    </g>
    <path d="M459 475L465 470.500Q482 473 497 470Q499 473 494 476Q480 480 465 479.500z" fill="#202020" filter="url(#b1)" />
    <circle cx="465" cy="474.800" r="4.300" fill="#000" />
    <path d="M457 475h6" stroke="#111" strokeWidth="1.500" />
  </g>
);

const RenderArea = () => (
  <svg className="block h-[483px] w-[956px]" viewBox="343 223 956 483">
    <defs>
      <filter id="cmap" filterUnits="userSpaceOnUse" x="416" y="427" width="763" height="96" colorInterpolationFilters="sRGB">
        <feComponentTransfer>
          <feFuncR type="table" tableValues=".231 .384 .553 .722 .867 .961 .957 .871 .706" />
          <feFuncG type="table" tableValues=".298 .510 .690 .816 .867 .769 .604 .376 .016" />
          <feFuncB type="table" tableValues=".753 .918 .996 .976 .867 .678 .482 .302 .149" />
        </feComponentTransfer>
      </filter>
      <radialGradient id="hi"><stop stopColor="#fff" stopOpacity=".8" /><stop offset=".25" stopColor="#fff" stopOpacity=".62" /><stop offset=".5" stopColor="#fff" stopOpacity=".3" /><stop offset=".75" stopColor="#fff" stopOpacity=".08" /><stop offset="1" stopColor="#fff" stopOpacity="0" /></radialGradient>
      <radialGradient id="lo"><stop stopColor="#999" stopOpacity=".9" /><stop offset=".25" stopColor="#999" stopOpacity=".72" /><stop offset=".5" stopColor="#999" stopOpacity=".38" /><stop offset=".75" stopColor="#999" stopOpacity=".1" /><stop offset="1" stopColor="#999" stopOpacity="0" /></radialGradient>
      <linearGradient id="band" x1="0" x2="0" y1="0" y2="1"><stop stopColor="#a0a0a0" stopOpacity="0" /><stop offset=".2" stopColor="#a0a0a0" stopOpacity=".12" /><stop offset=".35" stopColor="#a0a0a0" stopOpacity=".65" /><stop offset=".5" stopColor="#a0a0a0" stopOpacity=".95" /><stop offset=".65" stopColor="#a0a0a0" stopOpacity=".65" /><stop offset=".8" stopColor="#a0a0a0" stopOpacity=".12" /><stop offset="1" stopColor="#a0a0a0" stopOpacity="0" /></linearGradient>
      <linearGradient id="fade"><stop stopColor="#fff" stopOpacity="0" /><stop offset=".25" stopColor="#fff" stopOpacity=".5" /><stop offset=".7" stopColor="#fff" /></linearGradient>
      <linearGradient id="inlet"><stop stopColor="#b6b6b6" /><stop offset=".5" stopColor="#b8b8b8" stopOpacity=".7" /><stop offset="1" stopColor="#c0c0c0" stopOpacity="0" /></linearGradient>
      <mask id="bm" maskUnits="userSpaceOnUse" x="570" y="427" width="620" height="96"><rect x="570" y="427" width="620" height="96" fill="url(#fade)" /></mask>
      <linearGradient id="bar" x1="0" x2="0" y1="0" y2="1">
        <stop stopColor="#b40426" /><stop offset=".125" stopColor="#de604d" /><stop offset=".25" stopColor="#f49a7b" /><stop offset=".375" stopColor="#f5c4ad" /><stop offset=".5" stopColor="#dddddd" /><stop offset=".625" stopColor="#b8d0f9" /><stop offset=".75" stopColor="#8db0fe" /><stop offset=".875" stopColor="#6282ea" /><stop offset="1" stopColor="#3b4cc0" />
      </linearGradient>
      <filter id="b1" filterUnits="userSpaceOnUse" x="416" y="427" width="240" height="96" colorInterpolationFilters="sRGB"><feGaussianBlur stdDeviation=".9" /></filter>
      <filter id="b15" filterUnits="userSpaceOnUse" x="416" y="427" width="240" height="96" colorInterpolationFilters="sRGB"><feGaussianBlur stdDeviation="1.500" /></filter>
      <filter id="b3" filterUnits="userSpaceOnUse" x="416" y="427" width="240" height="96" colorInterpolationFilters="sRGB"><feGaussianBlur stdDeviation="3" /></filter>
    </defs>
    <rect x="343" y="223" width="956" height="483" fill="#52576e" />
    <Flow />
    <rect x="1183" y="535" width="16" height="159" fill="url(#bar)" />
    <path d="M1196 535.500h12M1196 579.500h12M1196 637.500h12M1196 694.500h12" stroke="#fff" />
    <g fill="#f0f0f2" fontFamily="Lato" fontSize="16">
      <text x="1214" y="539" textLength="59" lengthAdjust="spacingAndGlyphs">1.4e+00</text>
      <text x="1214" y="583">1</text>
      <text x="1213" y="641" textLength="22" lengthAdjust="spacingAndGlyphs">0.5</text>
      <text x="1213" y="698" textLength="60" lengthAdjust="spacingAndGlyphs">0.0e+00</text>
      <text transform="translate(1290 691) rotate(-90)" textLength="156" lengthAdjust="spacingAndGlyphs">Vectors_ Magnitude</text>
    </g>
    <path d="M403.500 645v-25" stroke="#c9cad2" /><path d="M401 618.500l2.500-7 2.500 7z" fill="#e4dc18" />
    <path d="M422 645.500h7" stroke="#8e3b4b" /><path d="M429 642.500l8 3-8 3z" fill="#d01515" />
    <circle cx="403.500" cy="645.500" r="3" fill="#0b6b18" />
    <g fill="#fff" fontFamily="Lato" fontSize="9"><text x="405" y="618">Y</text><text x="432" y="646">X</text><text x="405.500" y="645.500">Z</text></g>
  </svg>
);

const menus: [string, number, string][] = [
  ["File", 0, "w-[39px]"], ["Edit", 0, "w-[41px]"], ["View", 0, "w-[48px]"], ["Sources", 0, "w-[68px]"], ["Filters", 2, "w-[57px]"],
  ["Tools", 0, "w-[51px]"], ["Catalyst", 0, "w-[70px]"], ["Macros", 0, "w-[64px]"], ["Help", 0, "w-[40px]"],
];

export default function App() {
  return (
    <div className="flex h-[726px] w-[1301px] flex-col overflow-hidden bg-[#efefef] font-['Noto_Sans',sans-serif] text-[14.5px] leading-none text-black">
      <div className="grid h-[31px] shrink-0 grid-cols-[1fr_auto_1fr] items-center border-b border-[#1c1b1b] bg-[#333131] text-white">
        <span />
        <span className="pb-[3px] text-[13.5px] font-bold tracking-[0.42px]">ParaView 5.7.0</span>
        <svg className="h-[24px] w-[90px] justify-self-end" viewBox="0 0 90 24" fill="none">
          <rect x="3" y="11" width="8" height="2" fill="#fff" /><rect x="39" y="7" width="4" height="4" stroke="#fff" strokeWidth="2" />
          <circle cx="75" cy="9" r="9" fill="#e95420" /><path d="M72 6l6 6M78 6l-6 6" stroke="#fff" strokeWidth="2" />
        </svg>
      </div>
      <div className="flex h-[22px] shrink-0 items-center border-b border-[#cfcfcf] pl-[8px] tracking-[0.1px]">
        {menus.map(([n, u, w]) => (
          <span key={n} className={`${w} whitespace-nowrap`}>
            {n.slice(0, u)}<span className="underline underline-offset-2">{n[u]}</span>{n.slice(u + 1)}
          </span>
        ))}
      </div>
      <Toolbar1 />
      <Toolbar2 />
      <Toolbar3 />
      <div className="flex h-[541px] shrink-0">
        <div className="w-[332px] shrink-0">
          <div className="flex h-[20px] items-center pt-px pl-[2px] tracking-[0.06px]">Pipeline Browser<DockButtons /></div>
          <Pipeline />
          <div className="flex h-[6px] items-center justify-center"><div className="w-[18px] border-t border-dotted border-[#b0b0b0]" /></div>
          <PropertiesPanel />
        </div>
        <div className="flex w-[6px] shrink-0 items-center justify-center"><div className="h-[18px] border-l border-dotted border-[#b0b0b0]" /></div>
        <div className="flex w-[963px] shrink-0 flex-col pt-px">
          <div className="flex h-[28px] items-end">
            <div className="flex h-[28px] w-[129px] items-center rounded-t-[3px] border border-b-0 border-[#ababab] bg-[#fbfbfb] pl-[11px]">
              <svg className="mr-[4px] h-4 w-4" viewBox="0 0 16 16"><rect x=".5" y=".5" width="15" height="15" fill="#fff" stroke="#444" /><rect width="16" height="4.500" fill="#333" /></svg>
              <span className="mr-[4px] whitespace-nowrap">Layout #1</span>
              <CloseBox />
            </div>
            <div className="flex h-[26px] w-[33px] items-center justify-center rounded-tr-[3px] border border-l-0 border-[#ababab] bg-[#e8e8e8]">+</div>
            <div className="h-px flex-1 bg-[#ababab]" />
          </div>
          <div className="border-b border-l border-[#b0b0b0]">
            <ViewToolbar />
            <div className="mt-[2px] ml-px h-[489px] w-[962px] border-2 border-[#0000ff] bg-[#52576e]">
              <div className="w-[958px] border border-[#f4f4f4]"><RenderArea /></div>
            </div>
          </div>
        </div>
      </div>
      <div className="flex flex-1 items-start pt-[4px]">
        <div className="ml-[653px] flex h-[19px] w-[18px] shrink-0 items-center justify-center rounded-[3px] border border-[#b5b5b5] bg-[#f4f4f4]">
          <svg className="-mt-[2px] h-2 w-2" viewBox="0 0 8 8"><path d="M1 1l6 6M7 1L1 7" stroke="#909090" strokeWidth="2" /></svg>
        </div>
        <div className="ml-[3px] h-[19px] flex-1 border-t border-l border-[#a0a0a0] bg-[#ebebeb]" />
      </div>
    </div>
  );
}
